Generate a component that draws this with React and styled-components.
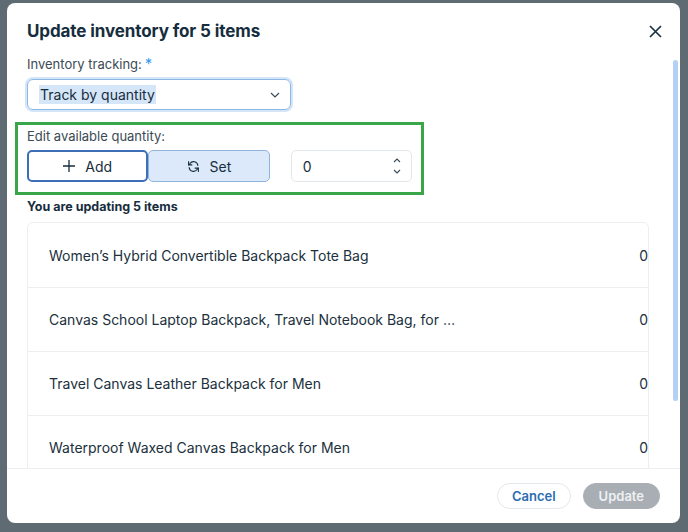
import styled, { createGlobalStyle } from 'styled-components'

const Global = createGlobalStyle`
  html, body { margin: 0; height: 100%; }
  body { background: #5f6b73; font-family: Inter, "Noto Sans", sans-serif; color: #20303c; }
`

const Backdrop = styled.div`
  width: 688px; height: 532px;
  padding: 3px 8px 9px 7px;
  box-sizing: border-box;
`

const Modal = styled.div`
  position: relative;
  height: 100%;
  background: #fff;
  border-radius: 8px;
  display: flex; flex-direction: column;
  overflow: hidden;
`

const Header = styled.div`
  display: flex; justify-content: space-between; align-items: center;
  padding: 18px 18px 0 20px;
  h1 { margin: 0; font-size: 17px; font-weight: 700; color: #162d3d; letter-spacing: -0.1px; }
`

const Close = styled.button`
  border: none; background: none; padding: 0; cursor: pointer; color: #162d3d;
  display: flex;
`

const Body = styled.div`
  flex: 1;
  overflow: hidden;
  padding: 13px 32px 0 20px;
`

const Label = styled.div`
  font-size: 13px; color: #3b4a55; margin-bottom: 6px;
  span { color: #3899ec; font-size: 15px; margin-left: 3px; }
`

const Select = styled.div`
  width: 264px; height: 31px; box-sizing: border-box;
  border: 1px solid #8bb8e8; border-radius: 6px;
  box-shadow: 0 0 0 2px #d4e5f8;
  display: flex; align-items: center; justify-content: space-between;
  padding: 0 10px 0 11px;
  font-size: 14px; color: #162d3d;
  mark { background: #d6e6f9; color: inherit; padding: 1px 1px; }
`

const Highlight = styled.div`
  margin: 12px 0 0 -12px;
  width: 409px; height: 73px; box-sizing: border-box;
  border: 3px solid #3aa64a;
  padding: 3px 9px 0;
`

const Controls = styled.div`
  display: flex; align-items: center;
`

const Toggle = styled.button`
  width: 122px; height: 32px; box-sizing: border-box;
  border: ${p => p.$active ? '1px solid #3c6fb5' : '1px solid #8fb3da'};
  border-width: ${p => p.$active ? '2px' : '1px'};
  border-radius: 5px;
  background: ${p => p.$active ? '#fff' : '#dbe9fa'};
  display: flex; align-items: center; justify-content: center; gap: 10px;
  font: 14px Inter, sans-serif; color: #162d3d;
  cursor: pointer;
`

const NumberBox = styled.div`
  margin-left: 21px;
  width: 122px; height: 32px; box-sizing: border-box;
  border: 1px solid #e3e8ec; border-radius: 5px;
  display: flex; align-items: center; justify-content: space-between;
  padding: 0 10px 0 11px; font-size: 14px;
`

const Sub = styled.div`
  font-size: 12.5px; font-weight: 700; color: #162d3d;
  margin: 4px 0 8px;
`

const List = styled.div`
  border: 1px solid #eceff1; border-radius: 6px;
  width: 622px; box-sizing: border-box;
`

const Row = styled.div`
  height: 64px; box-sizing: border-box;
  display: flex; align-items: center; justify-content: space-between;
  padding: 0 0 0 21px;
  font-size: 14px; color: #20303c;
  & + & { border-top: 1px solid #eceff1; }
`

const Footer = styled.div`
  border-top: 1px solid #eceff1;
  height: 54px; flex-shrink: 0;
  display: flex; justify-content: flex-end; align-items: center; gap: 12px;
  padding-right: 20px;
`

const Btn = styled.button`
  height: 26px; border-radius: 13px; padding: 0 ${p => p.$primary ? 15 : 14}px;
  font: 600 13px Inter, sans-serif;
  border: 1px solid ${p => p.$primary ? '#a9aeb4' : '#e3e8ec'};
  background: ${p => p.$primary ? '#a9aeb4' : '#fff'};
  color: ${p => p.$primary ? '#eef0f2' : '#2b6cb0'};
`

const Scrollbar = styled.div`
  position: absolute; right: 2px; top: 57px;
  width: 5px; height: 341px; border-radius: 3px;
  background: #b4d0f5;
`

const items = [
  'Women’s Hybrid Convertible Backpack Tote Bag',
  'Canvas School Laptop Backpack, Travel Notebook Bag, for …',
  'Travel Canvas Leather Backpack for Men',
  'Waterproof Waxed Canvas Backpack for Men',
]

export default function App() {
  return (
    <Backdrop>
      <Global />
      <Modal>
        <Header>
          <h1>Update inventory for 5 items</h1>
          <Close>
            <svg width="13" height="13" viewBox="0 0 13 13"><path d="M1 1l11 11M12 1L1 12" stroke="currentColor" strokeWidth="1.6" /></svg>
          </Close>
        </Header>
        <Body>
          <Label>Inventory tracking:<span>*</span></Label>
          <Select>
            <mark>Track by quantity</mark>
            <svg width="10" height="6" viewBox="0 0 10 6"><path d="M1 1l4 4 4-4" fill="none" stroke="#3b4a55" strokeWidth="1.2" /></svg>
          </Select>
          <Highlight>
            <Label>Edit available quantity:</Label>
            <Controls>
              <Toggle $active>
                <svg width="12" height="12" viewBox="0 0 12 12"><path d="M6 0v12M0 6h12" stroke="#162d3d" strokeWidth="1.3" /></svg>
                Add
              </Toggle>
              <Toggle>
                <svg width="13" height="13" viewBox="0 0 24 24" fill="none" stroke="#162d3d" strokeWidth="2" strokeLinecap="round" strokeLinejoin="round"><path d="M20 10a8 8 0 0 0-14.5-3.5L3 9" /><path d="M3 3v6h6" /><path d="M4 14a8 8 0 0 0 14.5 3.5L21 15" /><path d="M21 21v-6h-6" /></svg>
                Set
              </Toggle>
              <NumberBox>
                0
                <svg width="8" height="18" viewBox="0 0 8 18"><path d="M1 5l3-3 3 3M1 13l3 3 3-3" fill="none" stroke="#3b4a55" strokeWidth="1.1" /></svg>
              </NumberBox>
            </Controls>
          </Highlight>
          <Sub>You are updating 5 items</Sub>
          <List>
            {items.map(t => (
              <Row key={t}><span>{t}</span><span>0</span></Row>
            ))}
          </List>
        </Body>
        <Footer>
          <Btn>Cancel</Btn>
          <Btn $primary>Update</Btn>
        </Footer>
        <Scrollbar />
      </Modal>
    </Backdrop>
  )
}
